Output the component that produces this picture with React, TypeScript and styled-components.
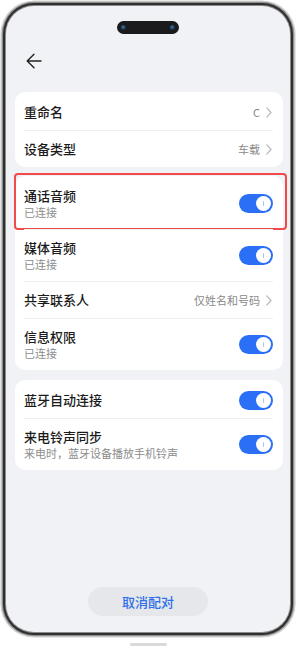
import React from "react";
import styled, { createGlobalStyle } from "styled-components";

const Global = createGlobalStyle`
  html, body { margin: 0; padding: 0; background: #ffffff; }
  body { font-family: "Noto Sans CJK SC", "Noto Sans", sans-serif; -webkit-font-smoothing: antialiased; }
  * { box-sizing: border-box; }
`;

const Device = styled.div`
  width: 298px;
  height: 646px;
  padding: 6px 8px 0 6px;
  display: flex;
  flex-direction: column;
  align-items: center;
  overflow: hidden;
`;

const Screen = styled.div`
  width: 284px;
  height: 626px;
  flex: none;
  border-radius: 28px;
  background: #f1f2f6;
  box-shadow: 0 0 0 1px #8a8a8a, 0 0 0 3px #2f2f2f, 0 0 0 4.2px #8f8f8f,
    0 0 0 5.6px #d2d2d2;
  display: flex;
  flex-direction: column;
  padding: 15px 7px 16px 9px;
  overflow: hidden;
`;

const BottomKey = styled.div`
  width: 37px;
  height: 3px;
  margin-top: 11px;
  border-radius: 2px;
  background: #dadada;
  flex: none;
`;

const Island = styled.div`
  align-self: center;
  margin-left: -2px;
  width: 62px;
  height: 13px;
  border-radius: 7px;
  background: #1b1b1d;
  display: flex;
  align-items: center;
  justify-content: space-between;
  padding: 0 4px;
  flex: none;
`;

const Lens = styled.span`
  width: 5px;
  height: 5px;
  border-radius: 50%;
  background: radial-gradient(circle at 40% 40%, #3f78a8 0, #1d3550 60%, #15202c 100%);
`;

const Header = styled.div`
  height: 54px;
  display: flex;
  align-items: center;
  padding-left: 11px;
  flex: none;
`;

const Card = styled.div<{ $gap?: number }>`
  background: #ffffff;
  border-radius: 10px;
  padding: 2px 10px 0 9px;
  margin-top: ${(p) => p.$gap ?? 0}px;
  display: flex;
  flex-direction: column;
  flex: none;
`;

const Row = styled.div<{ $tall?: boolean; $first?: boolean }>`
  position: relative;
  height: ${(p) => (p.$tall ? 52 : 37) - (p.$first ? 1 : 0)}px;
  border-top: ${(p) => (p.$first ? "none" : "1px solid #eeeff1")};
  display: flex;
  align-items: center;
  justify-content: space-between;
`;

const Highlight = styled.div`
  position: absolute;
  left: -10px;
  right: -14px;
  top: -5px;
  bottom: -1px;
  border: 2.5px solid #f24a4a;
  border-radius: 4px;
  pointer-events: none;
`;

const Texts = styled.div`
  display: flex;
  flex-direction: column;
  margin-top: -1px;
`;

const Title = styled.div`
  font-size: 13px;
  line-height: 18px;
  font-weight: 500;
  color: #1b1b1b;
  white-space: nowrap;
`;

const Sub = styled.div`
  font-size: 11px;
  line-height: 15px;
  color: #8c8c8c;
  white-space: nowrap;
`;

const Trail = styled.div`
  display: flex;
  align-items: center;
  gap: 6px;
  margin-right: 1px;
`;

const Value = styled.span`
  font-size: 11px;
  color: #8a8a8a;
  white-space: nowrap;
`;

const Toggle = styled.div`
  width: 34px;
  height: 19px;
  border-radius: 10px;
  background: #2a6ff5;
  display: flex;
  align-items: center;
  justify-content: flex-end;
  padding: 0 2px;
`;

const Thumb = styled.div`
  width: 15px;
  height: 15px;
  border-radius: 50%;
  background: #ffffff;
  display: flex;
  align-items: center;
  justify-content: center;
  &::after {
    content: "";
    width: 1px;
    height: 5px;
    border-radius: 1px;
    background: #a9c3f6;
  }
`;

const Spacer = styled.div`
  flex: 1;
`;

const CancelButton = styled.button`
  align-self: center;
  margin-left: -2px;
  width: 120px;
  height: 29px;
  border: none;
  border-radius: 15px;
  background: #e6e7eb;
  color: #2f6fe8;
  font-family: "Noto Sans CJK SC", sans-serif;
  font-size: 13px;
  font-weight: 500;
  padding: 0;
  flex: none;
`;

const BackIcon = () => (
  <svg width="16" height="16" viewBox="0 0 16 16" fill="none">
    <path
      d="M15 8H1.5M8 1.2L1.2 8L8 14.8"
      stroke="#222"
      strokeWidth="1.4"
      strokeLinecap="round"
      strokeLinejoin="round"
    />
  </svg>
);

const Chevron = () => (
  <svg width="6" height="11" viewBox="0 0 6 11" fill="none">
    <path d="M0.8 0.8L5 5.5L0.8 10.2" stroke="#b9b9b9" strokeWidth="1.2" strokeLinecap="round" strokeLinejoin="round" />
  </svg>
);

const Switch = () => (
  <Toggle>
    <Thumb />
  </Toggle>
);

type Item = {
  title: string;
  sub?: string;
  value?: string;
  toggle?: boolean;
  highlight?: boolean;
};

const groups: { gap: number; items: Item[] }[] = [
  {
    gap: 4,
    items: [
      { title: "重命名", value: "C" },
      { title: "设备类型", value: "车载" },
    ],
  },
  {
    gap: 9,
    items: [
      { title: "通话音频", sub: "已连接", toggle: true, highlight: true },
      { title: "媒体音频", sub: "已连接", toggle: true },
      { title: "共享联系人", value: "仅姓名和号码" },
      { title: "信息权限", sub: "已连接", toggle: true },
    ],
  },
  {
    gap: 10,
    items: [
      { title: "蓝牙自动连接", toggle: true },
      { title: "来电铃声同步", sub: "来电时，蓝牙设备播放手机铃声", toggle: true },
    ],
  },
];

export default function App() {
  return (
    <>
      <Global />
      <Device>
        <Screen>
          <Island>
            <Lens />
            <Lens />
          </Island>
          <Header>
            <BackIcon />
          </Header>
          {groups.map((g, gi) => (
            <Card key={gi} $gap={g.gap}>
              {g.items.map((it, i) => (
                <Row key={it.title} $tall={!!it.sub} $first={i === 0}>
                  {it.highlight && <Highlight />}
                  <Texts>
                    <Title>{it.title}</Title>
                    {it.sub && <Sub>{it.sub}</Sub>}
                  </Texts>
                  {it.toggle ? (
                    <Switch />
                  ) : (
                    <Trail>
                      <Value>{it.value}</Value>
                      <Chevron />
                    </Trail>
                  )}
                </Row>
              ))}
            </Card>
          ))}
          <Spacer />
          <CancelButton>取消配对</CancelButton>
        </Screen>
        <BottomKey />
      </Device>
    </>
  );
}
